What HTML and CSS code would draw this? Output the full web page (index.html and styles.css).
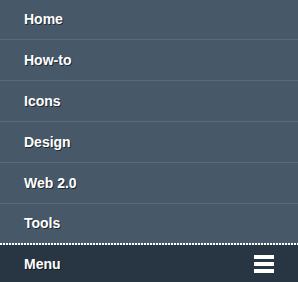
FILE: index.html
```html
<!DOCTYPE html>
<html lang="en">
  <head>
    <meta charset="UTF-8" />
    <title>Menu</title>
    <link rel="stylesheet" href="styles.css">
  </head>
  <body>
    <nav class="nav">
      <ul class="nav-list">
        <li><a href="#">Home</a></li>
        <li><a href="#">How-to</a></li>
        <li><a href="#">Icons</a></li>
        <li><a href="#">Design</a></li>
        <li><a href="#">Web 2.0</a></li>
        <li><a href="#">Tools</a></li>
      </ul>
      <div class="nav-bar">
        <span class="nav-title">Menu</span>
        <span class="burger">
          <span></span>
          <span></span>
          <span></span>
        </span>
      </div>
    </nav>
  </body>
</html>
```

FILE: styles.css
```css
/* Global */
body {
  margin: 0;
  font-family: "Liberation Sans", Arial, sans-serif;
  background: #283644;
  overflow: hidden;
}

.nav-list {
  list-style: none;
  margin: -1px 0 0;
  padding: 0;
  background: #475868;
}

.nav-list li {
  border-bottom: 1px solid #5a6b7a;
}

.nav-list li:last-child {
  border-bottom: none;
  padding-bottom: 2px;
  background-image: repeating-linear-gradient(90deg, #fff 0 2px, transparent 2px 3px);
  background-size: 100% 2px;
  background-position: left bottom;
  background-repeat: no-repeat;
}

.nav-list a {
  display: block;
  height: 40px;
  line-height: 40px;
  padding-left: 24px;
  color: #fff;
  font-size: 14px;
  font-weight: bold;
  text-decoration: none;
  text-shadow: 1px 1px 0 rgba(0, 0, 0, 0.55);
}

.nav-list li:last-child a {
  height: 39px;
  line-height: 39px;
}

/* Bottom bar */
.nav-bar {
  display: flex;
  align-items: center;
  justify-content: space-between;
  height: 38px;
  padding: 0 24px;
  background: #283644;
}

.nav-title {
  color: #fff;
  font-size: 14px;
  font-weight: bold;
  text-shadow: 1px 1px 0 rgba(0, 0, 0, 0.55);
}

.burger {
  display: flex;
  flex-direction: column;
  gap: 3px;
  width: 20px;
}

.burger span {
  height: 4px;
  background: #fff;
}
```
